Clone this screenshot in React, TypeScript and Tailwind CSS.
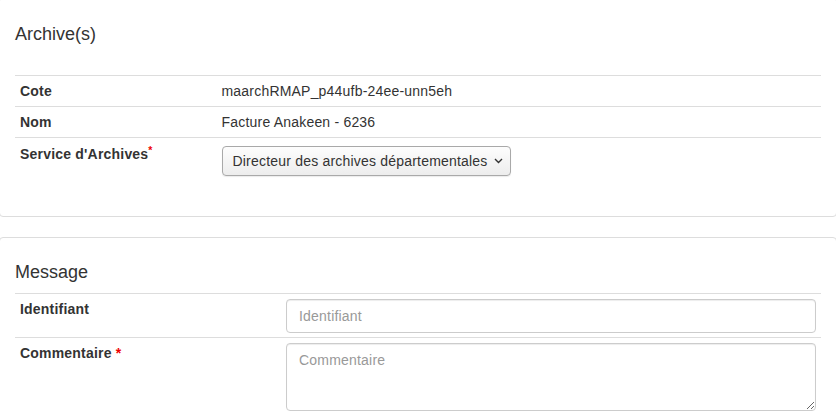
import React from 'react';

const rows = [
  { label: 'Cote', value: 'maarchRMAP_p44ufb-24ee-unn5eh' },
  { label: 'Nom', value: 'Facture Anakeen - 6236' },
];

function Chevron() {
  return (
    <svg width="9" height="6" viewBox="0 0 9 6" className="ml-[6px]">
      <path d="M1 1l3.5 3.5L8 1" fill="none" stroke="#333" strokeWidth="1.4" />
    </svg>
  );
}

export default function App() {
  return (
    <div className="min-h-screen overflow-hidden bg-white font-['Liberation_Sans',Arial,sans-serif] text-[14px] leading-5 tracking-[0.2px] text-[#333]">
      {/* Archive(s) panel */}
      <div className="-mx-px -mt-[3px] rounded-[4px] border border-[#ddd] px-[15px] pb-[35px] pt-[26px]">
        <h4 className="mb-[31px] h-5 text-[18px] leading-5 font-normal tracking-normal">Archive(s)</h4>
        <div>
          {rows.map((r) => (
            <div
              key={r.label}
              className="grid grid-cols-[25%_1fr] border-t border-[#ddd]"
            >
              <div className="px-[5px] py-[5px] font-bold">{r.label}</div>
              <div className="px-[5px] py-[5px]">{r.value}</div>
            </div>
          ))}
          <div className="grid grid-cols-[25%_1fr] border-t border-[#ddd]">
            <div className="px-[5px] pt-[6px] pb-[4px] font-bold">
              Service d'Archives<sup className="text-[#e00] font-bold">*</sup>
            </div>
            <div className="px-[5px] pt-[8px] pb-[5px]">
              <div className="inline-flex h-[30px] items-center rounded-[4px] border border-[#a9a9a9] bg-linear-to-b from-[#fdfdfd] to-[#ededed] pl-[10px] pr-[7px] shadow-[0_1px_1px_rgba(0,0,0,0.08)]">
                <span>Directeur des archives départementales</span>
                <Chevron />
              </div>
            </div>
          </div>
        </div>
      </div>

      {/* Message panel */}
      <div className="-mx-px mt-5 rounded-[4px] border border-[#ddd] px-[15px] pb-5 pt-[24px]">
        <h4 className="h-5 box-content border-b border-[#ddd] pb-[11px] text-[18px] leading-5 font-normal tracking-normal">
          Message
        </h4>
        <div className="grid grid-cols-[271px_1fr] border-b border-[#ddd]">
          <div className="px-[5px] pt-[5px] font-bold">Identifiant</div>
          <div className="pr-[5px] pt-[5px] pb-[4px]">
            <input
              placeholder="Identifiant"
              className="block h-[34px] w-full rounded-[4px] border border-[#ccc] px-3 text-[14px] shadow-[inset_0_1px_1px_rgba(0,0,0,0.075)] outline-none placeholder:text-[#999]"
            />
          </div>
        </div>
        <div className="grid grid-cols-[271px_1fr]">
          <div className="px-[5px] pt-[5px] font-bold">
            Commentaire <span className="text-[#e00]">*</span>
          </div>
          <div className="pr-[5px] pt-[5px]">
            <textarea
              placeholder="Commentaire"
              className="block h-[68px] w-full rounded-[4px] border border-[#ccc] px-3 py-[6px] text-[14px] shadow-[inset_0_1px_1px_rgba(0,0,0,0.075)] outline-none placeholder:text-[#999]"
            />
          </div>
        </div>
      </div>
    </div>
  );
}
